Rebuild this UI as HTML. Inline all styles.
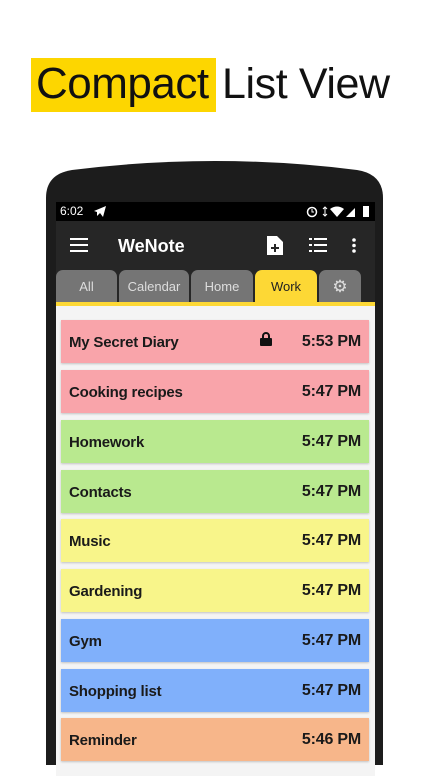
<!DOCTYPE html>
<html><head><meta charset="utf-8"><style>
*{margin:0;padding:0;box-sizing:border-box}
body{width:430px;height:765px;background:#fff;position:relative;overflow:hidden;font-family:"Liberation Sans",sans-serif}
.hl{position:absolute;left:31px;top:58px;width:185px;height:54px;background:#fdd600}
.title{position:absolute;top:57px;font-size:45px;line-height:54px;color:#111;letter-spacing:-0.3px;white-space:nowrap}
.status{position:absolute;left:56px;top:202px;width:319px;height:19px;background:#000;color:#fff;font-size:12px}
.bar{position:absolute;left:56px;top:221px;width:319px;height:85px;background:#262626}
.tab{position:absolute;top:270px;height:33px;background:#757575;border-radius:7px 7px 0 0;color:#ddd;font-size:13px;text-align:center;line-height:33px}
.yl{position:absolute;left:56px;top:302px;width:319px;height:4px;background:#fdd835}
.list{position:absolute;left:56px;top:306px;width:319px;height:470px;background:#f4f4f4}
.row{position:absolute;left:61px;width:308px;height:43px;font-weight:bold;font-size:15px;color:#1a1a1a;letter-spacing:-0.2px;box-shadow:0 1px 2px rgba(0,0,0,.2)}
.row span{position:absolute;left:8px;top:14px}
.row b{position:absolute;right:8px;top:13px;font-size:16px}
</style></head><body>
<div class="hl"></div>
<div class="title" style="left:36px;font-size:44px;letter-spacing:-0.5px">Compact</div>
<div class="title" style="left:222px;font-size:43px;letter-spacing:-0.4px">List View</div>
<svg style="position:absolute;left:0;top:0" width="430" height="765"><path d="M46,765 V198 Q46,174 72,170 Q215,152 357,170 Q383,174 383,198 V765 Z" fill="#1c1c1c"/></svg>
<div class="status"><span style="position:absolute;left:4px;top:2px">6:02</span>
<svg style="position:absolute;left:37px;top:3px" width="14" height="13" viewBox="0 0 14 13"><path d="M1 6L13 1L10 12L7 8L4 11V7Z" fill="#fff"/></svg>
<svg style="position:absolute;left:250px;top:3px" width="66" height="13" viewBox="0 0 66 13"><circle cx="6" cy="7" r="4.5" fill="none" stroke="#fff" stroke-width="1.5"/><path d="M6 4V7H8" stroke="#fff" fill="none"/><path d="M19 2V11M17 4L19 2L21 4M17 9L19 11L21 9" stroke="#fff" fill="none"/><path d="M24 4Q31 -1 38 4L31 12Z" fill="#fff"/><path d="M40 12L49 3V12Z" fill="#fff"/><rect x="57" y="1" width="6" height="11" fill="#fff"/></svg></div>
<div class="bar"></div>
<svg style="position:absolute;left:70px;top:238px" width="18" height="14"><rect y="0" width="18" height="2" fill="#fff"/><rect y="6" width="18" height="2" fill="#fff"/><rect y="12" width="18" height="2" fill="#fff"/></svg>
<div style="position:absolute;left:118px;top:236px;color:#fff;font-size:18px;font-weight:bold">WeNote</div>
<svg style="position:absolute;left:267px;top:236px" width="16" height="19" viewBox="0 0 16 19"><path d="M0 0H10L16 6V19H0Z" fill="#fff"/><path d="M8 8V16M4 12H12" stroke="#262626" stroke-width="2"/></svg>
<svg style="position:absolute;left:309px;top:238px" width="18" height="14"><g fill="#fff"><rect width="3" height="2"/><rect x="5" width="13" height="2"/><rect y="6" width="3" height="2"/><rect x="5" y="6" width="13" height="2"/><rect y="12" width="3" height="2"/><rect x="5" y="12" width="13" height="2"/></g></svg>
<svg style="position:absolute;left:352px;top:238px" width="4" height="15"><circle cx="2" cy="2" r="1.8" fill="#fff"/><circle cx="2" cy="7.5" r="1.8" fill="#fff"/><circle cx="2" cy="13" r="1.8" fill="#fff"/></svg>
<div class="tab" style="left:56px;width:61px">All</div>
<div class="tab" style="left:119px;width:70px">Calendar</div>
<div class="tab" style="left:191px;width:62px">Home</div>
<div class="tab" style="left:255px;width:62px;background:#fdd835;color:#222">Work</div>
<div class="tab" style="left:319px;width:42px;font-size:17px">⚙</div>
<div class="yl"></div>
<div class="list"></div>
<div class="row" style="top:320px;background:#f9a4aa"><span>My Secret Diary</span><svg style="position:absolute;left:199px;top:12px" width="12" height="14" viewBox="0 0 12 14"><path d="M3 6V4A3 3 0 0 1 9 4V6" stroke="#111" stroke-width="2" fill="none"/><rect y="6" width="12" height="8" rx="1" fill="#111"/></svg><b>5:53 PM</b></div>
<div class="row" style="top:370px;background:#f9a4aa"><span>Cooking recipes</span><b>5:47 PM</b></div>
<div class="row" style="top:420px;background:#b9e98f"><span>Homework</span><b>5:47 PM</b></div>
<div class="row" style="top:470px;background:#b9e98f"><span>Contacts</span><b>5:47 PM</b></div>
<div class="row" style="top:519px;background:#f8f58a"><span>Music</span><b>5:47 PM</b></div>
<div class="row" style="top:569px;background:#f8f58a"><span>Gardening</span><b>5:47 PM</b></div>
<div class="row" style="top:619px;background:#80b0fb"><span>Gym</span><b>5:47 PM</b></div>
<div class="row" style="top:669px;background:#80b0fb"><span>Shopping list</span><b>5:47 PM</b></div>
<div class="row" style="top:718px;background:#f7b68a"><span>Reminder</span><b>5:46 PM</b></div>
</body></html>
